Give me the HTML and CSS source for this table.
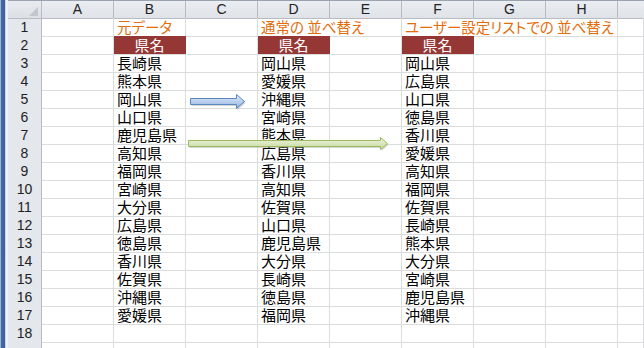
FILE: index.html
```html
<!DOCTYPE html>
<html lang="ja">
<head>
<meta charset="utf-8">
<link rel="stylesheet" href="styles.css">
</head>
<body>
<div class="window">
  <div class="frame"></div>
  <div class="gap"></div>
  <div class="sheet">
    <div class="row head">
      <div class="corner"><span class="tri"></span></div>
      <div class="ch">A</div><div class="ch">B</div><div class="ch">C</div><div class="ch">D</div><div class="ch">E</div><div class="ch">F</div><div class="ch">G</div><div class="ch">H</div><div class="ch last"></div>
    </div>
    <div class="row">
      <div class="rh">1</div><div class="c"></div><div class="c title">元データ</div><div class="c"></div><div class="c title span2">通常の 並べ替え</div><div class="c title span3">ユーザー設定リストでの 並べ替え</div><div class="c"></div>
    </div>
    <div class="row">
      <div class="rh">2</div><div class="c"></div><div class="c hdr">県名</div><div class="c"></div><div class="c hdr">県名</div><div class="c"></div><div class="c hdr">県名</div><div class="c"></div><div class="c"></div><div class="c"></div>
    </div>
    <div class="row"><div class="rh">3</div><div class="c"></div><div class="c">長崎県</div><div class="c"></div><div class="c">岡山県</div><div class="c"></div><div class="c">岡山県</div><div class="c"></div><div class="c"></div><div class="c"></div></div>
    <div class="row"><div class="rh">4</div><div class="c"></div><div class="c">熊本県</div><div class="c"></div><div class="c">愛媛県</div><div class="c"></div><div class="c">広島県</div><div class="c"></div><div class="c"></div><div class="c"></div></div>
    <div class="row"><div class="rh">5</div><div class="c"></div><div class="c">岡山県</div><div class="c"></div><div class="c">沖縄県</div><div class="c"></div><div class="c">山口県</div><div class="c"></div><div class="c"></div><div class="c"></div></div>
    <div class="row"><div class="rh">6</div><div class="c"></div><div class="c">山口県</div><div class="c"></div><div class="c">宮崎県</div><div class="c"></div><div class="c">徳島県</div><div class="c"></div><div class="c"></div><div class="c"></div></div>
    <div class="row"><div class="rh">7</div><div class="c"></div><div class="c">鹿児島県</div><div class="c"></div><div class="c">熊本県</div><div class="c"></div><div class="c">香川県</div><div class="c"></div><div class="c"></div><div class="c"></div></div>
    <div class="row"><div class="rh">8</div><div class="c"></div><div class="c">高知県</div><div class="c"></div><div class="c">広島県</div><div class="c"></div><div class="c">愛媛県</div><div class="c"></div><div class="c"></div><div class="c"></div></div>
    <div class="row"><div class="rh">9</div><div class="c"></div><div class="c">福岡県</div><div class="c"></div><div class="c">香川県</div><div class="c"></div><div class="c">高知県</div><div class="c"></div><div class="c"></div><div class="c"></div></div>
    <div class="row"><div class="rh">10</div><div class="c"></div><div class="c">宮崎県</div><div class="c"></div><div class="c">高知県</div><div class="c"></div><div class="c">福岡県</div><div class="c"></div><div class="c"></div><div class="c"></div></div>
    <div class="row"><div class="rh">11</div><div class="c"></div><div class="c">大分県</div><div class="c"></div><div class="c">佐賀県</div><div class="c"></div><div class="c">佐賀県</div><div class="c"></div><div class="c"></div><div class="c"></div></div>
    <div class="row"><div class="rh">12</div><div class="c"></div><div class="c">広島県</div><div class="c"></div><div class="c">山口県</div><div class="c"></div><div class="c">長崎県</div><div class="c"></div><div class="c"></div><div class="c"></div></div>
    <div class="row"><div class="rh">13</div><div class="c"></div><div class="c">徳島県</div><div class="c"></div><div class="c">鹿児島県</div><div class="c"></div><div class="c">熊本県</div><div class="c"></div><div class="c"></div><div class="c"></div></div>
    <div class="row"><div class="rh">14</div><div class="c"></div><div class="c">香川県</div><div class="c"></div><div class="c">大分県</div><div class="c"></div><div class="c">大分県</div><div class="c"></div><div class="c"></div><div class="c"></div></div>
    <div class="row"><div class="rh">15</div><div class="c"></div><div class="c">佐賀県</div><div class="c"></div><div class="c">長崎県</div><div class="c"></div><div class="c">宮崎県</div><div class="c"></div><div class="c"></div><div class="c"></div></div>
    <div class="row"><div class="rh">16</div><div class="c"></div><div class="c">沖縄県</div><div class="c"></div><div class="c">徳島県</div><div class="c"></div><div class="c">鹿児島県</div><div class="c"></div><div class="c"></div><div class="c"></div></div>
    <div class="row"><div class="rh">17</div><div class="c"></div><div class="c">愛媛県</div><div class="c"></div><div class="c">福岡県</div><div class="c"></div><div class="c">沖縄県</div><div class="c"></div><div class="c"></div><div class="c"></div></div>
    <div class="row"><div class="rh">18</div><div class="c"></div><div class="c"></div><div class="c"></div><div class="c"></div><div class="c"></div><div class="c"></div><div class="c"></div><div class="c"></div><div class="c"></div></div>
    <div class="row"><div class="rh"></div><div class="c"></div><div class="c"></div><div class="c"></div><div class="c"></div><div class="c"></div><div class="c"></div><div class="c"></div><div class="c"></div><div class="c"></div></div>

    <svg class="arrows" width="644" height="348" viewBox="0 0 644 348">
      <defs>
        <linearGradient id="gb" x1="0" y1="0" x2="0" y2="1">
          <stop offset="0" stop-color="#e3ecf8"/>
          <stop offset="1" stop-color="#93b3e2"/>
        </linearGradient>
        <linearGradient id="gg" x1="0" y1="0" x2="0" y2="1">
          <stop offset="0" stop-color="#f0f5e4"/>
          <stop offset="1" stop-color="#c3d89a"/>
        </linearGradient>
      </defs>
      <path d="M190.5 98.5 H236.5 V94.5 L244.5 101.5 L236.5 108.5 V104.5 H190.5 Z" fill="#8a8a8a" opacity="0.35" transform="translate(1,1.5)"/>
      <path d="M190.5 98.5 H236.5 V94.5 L244.5 101.5 L236.5 108.5 V104.5 H190.5 Z" fill="url(#gb)" stroke="#5b86c2" stroke-width="1"/>
      <path d="M188.5 140.5 H380.5 V137.5 L387.5 143.5 L380.5 149.5 V146.5 H188.5 Z" fill="#8a8a8a" opacity="0.35" transform="translate(1,1.5)"/>
      <path d="M188.5 140.5 H380.5 V137.5 L387.5 143.5 L380.5 149.5 V146.5 H188.5 Z" fill="url(#gg)" stroke="#9bbb59" stroke-width="1"/>
    </svg>
  </div>
</div>
</body>
</html>
```

FILE: styles.css
```css
* { box-sizing: border-box; }
html, body {
  margin: 0;
  padding: 0;
  width: 644px;
  height: 348px;
  overflow: hidden;
  background: #ffffff;
}
.window {
  display: flex;
  width: 644px;
  height: 348px;
  overflow: hidden;
}
.frame {
  flex: 0 0 6px;
  background: linear-gradient(to right, #9fb2cf 0, #9fb2cf 1px, #456aa5 1px, #3c5f9a 5px, #c9d5e7 5px);
}
.gap {
  flex: 0 0 2px;
  background: #eef1f5;
}
.sheet {
  position: relative;
  flex: 1;
  font-family: "Noto Sans CJK JP", "Liberation Sans", sans-serif;
  font-size: 15px;
  color: #000;
}
.row {
  display: grid;
  grid-template-columns: 34px repeat(8, 72px) 1fr;
  height: 18px;
}
.head {
  border-top: 1px solid #9aa3ae;
}
.corner {
  position: relative;
  background: linear-gradient(#e8ebef, #dcdfe4);
  border-right: 1px solid #b7bcc4;
  border-bottom: 1px solid #b7bcc4;
}
.tri {
  position: absolute;
  right: 3px;
  bottom: 2px;
  width: 0;
  height: 0;
  border-left: 9px solid transparent;
  border-bottom: 9px solid #c3c7cd;
}
.ch {
  background: linear-gradient(#eaedf1, #dfe3e8);
  border-right: 1px solid #b7bcc4;
  border-bottom: 1px solid #b7bcc4;
  text-align: center;
  font-family: "Liberation Sans", sans-serif;
  font-size: 14px;
  line-height: 17px;
  color: #222;
}
.ch.last { border-right: none; }
.rh {
  background: #e4e7eb;
  border-right: 1px solid #b7bcc4;
  border-bottom: 1px solid #c3c7cd;
  text-align: center;
  font-family: "Liberation Sans", sans-serif;
  font-size: 14px;
  line-height: 18px;
  color: #222;
}
.c {
  border-right: 1px solid #dadcdd;
  border-bottom: 1px solid #dadcdd;
  padding: 1px 0 0 3px;
  line-height: 16px;
  white-space: nowrap;
  overflow: visible;
}
.title {
  color: #e46c0a;
  font-size: 14.5px;
  font-feature-settings: "palt";
}
.span2 { grid-column: span 2; }
.span3 { grid-column: span 3; }
.hdr {
  background: #953735;
  color: #ffffff;
  text-align: center;
  border-right-color: #953735;
  padding-left: 0;
}
.arrows {
  position: absolute;
  left: -8px;
  top: 0;
  pointer-events: none;
}
```
